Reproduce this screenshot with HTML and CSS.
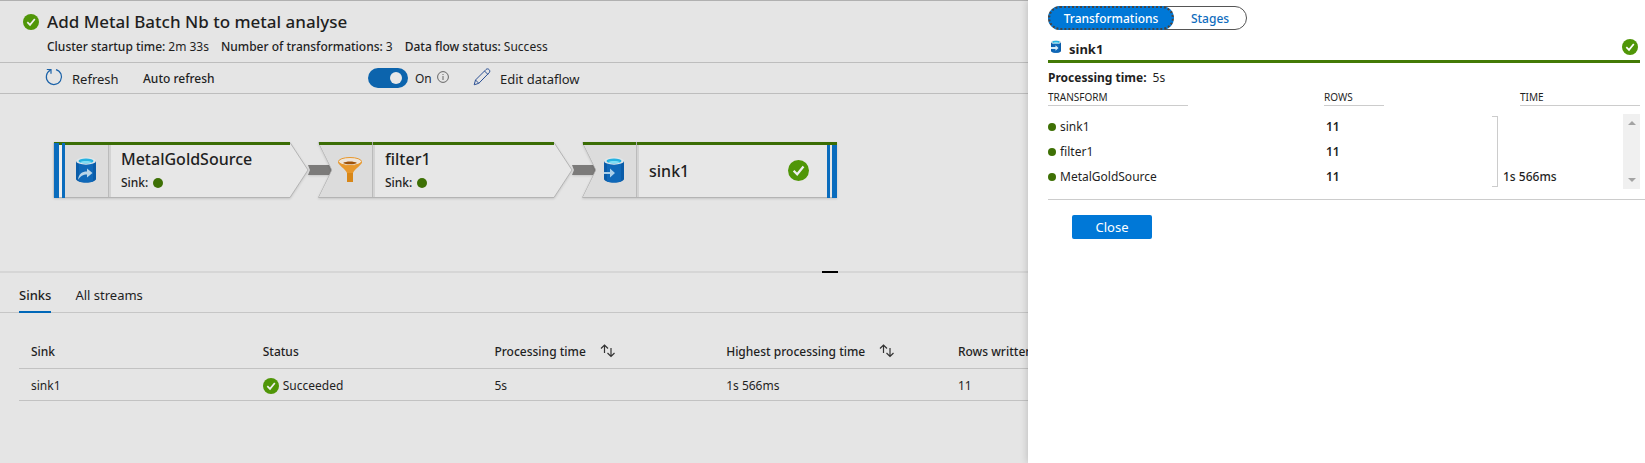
FILE: index.html
```html
<!DOCTYPE html>
<html lang="en">
<head>
<meta charset="utf-8">
<title>Data flow monitoring</title>
<link rel="stylesheet" href="styles.css">
</head>
<body>
<svg class="defs" aria-hidden="true">
  <symbol id="check" viewBox="0 0 16 16">
    <circle cx="8" cy="8" r="8" fill="var(--check)"/>
    <path d="M4.3 8.2 7 10.9 11.8 5" fill="none" stroke="var(--tick)" stroke-width="1.7"/>
  </symbol>
  <symbol id="db" viewBox="0 0 20 26">
    <path d="M0 4v18c0 1.900 4.500 3.500 10 3.500s10-1.600 10-3.500V4z" fill="#0a5ca8"/>
    <path d="M3 5v19.500c2 .7 4.500 1 7 1s5-.3 7-1V5z" fill="#0f68b8"/>
    <ellipse cx="10" cy="4" rx="10" ry="3.700" fill="#dfe6ea"/>
    <ellipse cx="10" cy="4" rx="7.500" ry="2.600" fill="#26b2e0"/>
    <path d="M4 5.200c2-1.500 10-1.500 12 0-2 1.600-10 1.600-12 0z" fill="#7fdcf3"/>
  </symbol>
  <symbol id="sort" viewBox="0 0 16 14">
    <path d="M4.500 9V1.500M1 4.500l3.500-3.500L8 4.500M11 4v8.500M7.500 9l3.500 3.500L14.500 9" fill="none" stroke="#333" stroke-width="1.200"/>
  </symbol>
</svg>

<main class="monitor">
  <header class="title-block">
    <svg class="status-icon"><use href="#check"/></svg>
    <div>
      <h1>Add Metal Batch Nb to metal analyse</h1>
      <dl class="facts">
        <div><dt>Cluster startup time:</dt><dd>2m 33s</dd></div>
        <div><dt>Number of transformations:</dt><dd>3</dd></div>
        <div><dt>Data flow status:</dt><dd>Success</dd></div>
      </dl>
    </div>
  </header>

  <div class="toolbar">
    <button class="tool refresh" type="button">
      <svg viewBox="0 0 18 18"><path d="M11 1.600A7.600 7.600 0 1 1 5.200 2.300M1.800 1.500H6V5.700" fill="none" stroke="#1b62a8" stroke-width="1.200"/></svg>
      <span>Refresh</span>
    </button>
    <label class="auto-label" for="auto">Auto refresh</label>
    <input class="toggle" id="auto" type="checkbox" role="switch" checked>
    <span class="toggle-state">On</span>
    <svg class="info" viewBox="0 0 12 12"><circle cx="6" cy="6" r="5.400" fill="none" stroke="#666"/><path d="M6 5v4M6 3v1" stroke="#666"/></svg>
    <button class="tool edit" type="button">
      <svg viewBox="0 0 18 18"><path d="M1.200 16.800 2.500 12 13 1.500c1-1 2.300-.7 3.100.1s1 2.100.1 3.100L5.800 15.300zM2.500 12l3.300 3.300M11.500 3l3.300 3.300" fill="none" stroke="#2a4f94" stroke-width="1"/></svg>
      <span>Edit dataflow</span>
    </button>
  </div>

  <section class="graph" aria-label="Data flow">
    <article class="node source">
      <svg class="shape" viewBox="0 0 280 58">
        <path d="M0 .5H236L254 28 236 55.500H0z" fill="#e7e7e7" stroke="#b4b4b4"/>
        <path d="M11 0H54V55H11z" fill="#dcdcdc"/>
        <path d="M54.500 3V55" stroke="#bbb"/><path d="M56 3V55" stroke="#d3d3d3" stroke-width="2"/>
        <path d="M0 1.500H236" stroke="#3b6d05" stroke-width="3"/>
        <path d="M0 1H5V56H0zM8 1h3V56H8z" fill="#0a6cbd"/><path d="M5 3h3V55H5z" fill="#efefef"/>
        <path d="M254 23H276L278 28 276 33H254L256 28z" fill="#7c7b7a"/>
      </svg>
      <svg class="node-icon" viewBox="0 0 20 26"><use href="#db"/><path d="M2 23c.5-6 4-8.500 9-8.500V11.500l5.500 4.500-5.500 4.500V17.500c-4 0-6.500 1.500-9 5.500z" fill="#b9d5e8"/></svg>
      <div class="node-text"><h2>MetalGoldSource</h2><p>Sink: <i class="dot"></i></p></div>
    </article>
    <article class="node">
      <svg class="shape" viewBox="0 0 280 58">
        <path d="M.5 .5H236L254 28 236 55.500H.5L14 28z" fill="#e7e7e7" stroke="#b4b4b4"/>
        <path d="M1 1H54V55H1L14.500 28z" fill="#dcdcdc"/>
        <path d="M54.500 3V55" stroke="#bbb"/><path d="M56 3V55" stroke="#d3d3d3" stroke-width="2"/>
        <path d="M1 1.500H236" stroke="#3b6d05" stroke-width="3"/><path d="M54.500 0V3" stroke="#aaa"/>
        <path d="M254 23H276L278 28 276 33H254L256 28z" fill="#7c7b7a"/>
      </svg>
      <svg class="node-icon funnel" viewBox="0 0 24 26">
        <path d="M0 5c0 3 7 6.500 9 11v9h6V16c2-4.500 9-8 9-11z" fill="#e8982c"/>
        <path d="M9 16h6v9H9z" fill="#d88718"/>
        <ellipse cx="12" cy="4.500" rx="11.500" ry="4" fill="#eee4d8" stroke="#e8982c"/>
        <path d="M5 6c3-2 11-2 14 0-3 1.800-11 1.800-14 0z" fill="#9f5208"/>
      </svg>
      <div class="node-text"><h2>filter1</h2><p>Sink: <i class="dot"></i></p></div>
    </article>
    <article class="node">
      <svg class="shape" viewBox="0 0 280 58">
        <path d="M.5 .5H254V55.500H.5L14 28z" fill="#e7e7e7" stroke="#b4b4b4"/>
        <path d="M1 1H54V55H1L14.500 28z" fill="#dcdcdc"/>
        <path d="M54.500 3V55" stroke="#bbb"/><path d="M56 3V55" stroke="#d3d3d3" stroke-width="2"/>
        <path d="M245 1h3V56h-3zM250 1h5V56h-5z" fill="#0a6cbd"/>
        <path d="M1 1.500H255" stroke="#3b6d05" stroke-width="3"/><path d="M54.500 0V3" stroke="#aaa"/>
      </svg>
      <svg class="node-icon" viewBox="0 0 20 26"><use href="#db"/><path d="M0 15h6v-3.500l5 4.500-5 4.500V17H0z" fill="#a9cfe9"/></svg>
      <div class="node-text"><h2>sink1</h2></div>
      <svg class="node-check"><use href="#check"/></svg>
    </article>
  </section>

  <div class="splitter"><span></span></div>

  <nav class="tabs">
    <button type="button" class="tab active">Sinks</button>
    <button type="button" class="tab">All streams</button>
  </nav>

  <div class="results">
    <table>
      <thead>
        <tr><th>Sink</th><th>Status</th><th>Processing time<svg class="sort"><use href="#sort"/></svg></th><th>Highest processing time<svg class="sort"><use href="#sort"/></svg></th><th class="rest">Rows written</th></tr>
      </thead>
      <tbody>
        <tr><td>sink1</td><td><span class="state"><svg class="status-icon"><use href="#check"/></svg>Succeeded</span></td><td>5s</td><td>1s 566ms</td><td>11</td></tr>
      </tbody>
    </table>
  </div>
</main>

<aside class="panel">
  <div class="pills">
    <button type="button" class="pill on">Transformations</button>
    <button type="button" class="pill">Stages</button>
  </div>
  <div class="panel-title">
    <svg class="mini-db" viewBox="0 0 20 26"><use href="#db"/><path d="M0 14h9v-3.500l6 5.500-6 5.500V18H0z" fill="#d9ecf8"/></svg>
    <h2>sink1</h2>
    <svg class="status-icon"><use href="#check"/></svg>
  </div>
  <p class="total"><b>Processing time:</b><span>5s</span></p>
  <table class="transforms">
    <thead>
      <tr><th class="c-name"><span>TRANSFORM</span></th><th class="c-rows"><span>ROWS</span></th><th class="c-time"><span>TIME</span></th></tr>
    </thead>
    <tbody>
      <tr><td><i class="dot"></i>sink1</td><td class="num">11</td>
        <td rowspan="3" class="time-cell"><div class="time"><span class="bracket"></span><span class="value">1s 566ms</span><div class="scroll"><svg viewBox="0 0 8 4"><path d="M0 4 4 0 8 4z"/></svg><svg viewBox="0 0 8 4"><path d="M0 0H8L4 4z"/></svg></div></div></td></tr>
      <tr><td><i class="dot"></i>filter1</td><td class="num">11</td></tr>
      <tr><td><i class="dot"></i>MetalGoldSource</td><td class="num">11</td></tr>
    </tbody>
  </table>
  <div class="panel-foot"><button type="button" class="close">Close</button></div>
</aside>
</body>
</html>
```

FILE: styles.css
```css
* { box-sizing: border-box; }
:root { --check: #509608; --tick: #f0f0f0; }
body {
  margin: 0;
  min-height: 100vh;
  position: relative;
  overflow: hidden;
  background: #e5e5e5;
  color: #1f1f1f;
  font: 13px/18px "Noto Sans", "Open Sans", sans-serif;
}
h1, h2, p, dl, dd { margin: 0; }
button { font: inherit; color: inherit; background: none; border: 0; padding: 0; }
svg { display: block; flex: none; overflow: visible; }
.defs { position: absolute; width: 0; height: 0; }
.dot { display: inline-block; width: 10px; height: 10px; border-radius: 50%; background: #3e7005; }
.status-icon { width: 16px; height: 16px; }

.title-block {
  display: flex;
  gap: 8px;
  height: 63px;
  padding: 9px 23px 0;
  border-top: 1px solid #b0b0b0;
  border-bottom: 1px solid #bdbdbd;
}
.title-block .status-icon { margin-top: 4px; }
h1 { font-size: 17px; line-height: 24px; font-weight: 500; }
.facts { display: flex; gap: 12px; margin-top: 4px; font-size: 12px; }
.facts div { display: flex; gap: 3px; }
.facts dt { font-weight: 500; }

.toolbar {
  display: flex;
  align-items: center;
  height: 31px;
  padding-left: 45px;
  border-bottom: 1px solid #bdbdbd;
}
.tool { display: flex; align-items: center; gap: 9px; }
.tool svg { width: 18px; height: 18px; margin-bottom: 2px; }
.tool span { padding-top: 2px; }
.refresh { width: 98px; }
.auto-label { width: 225px; padding-top: 2px; font-size: 12px; font-weight: 500; }
.toggle {
  appearance: none;
  display: flex;
  align-items: center;
  justify-content: flex-end;
  width: 40px;
  height: 20px;
  margin: 0 7px 0 0;
  padding-right: 6px;
  border-radius: 10px;
  background: #0c64ad;
}
.toggle::after { content: ""; width: 12px; height: 12px; border-radius: 50%; background: #e8e8e8; }
.toggle-state { width: 22px; padding-top: 2px; font-size: 12px; }
.info { width: 12px; height: 12px; margin: 0 24px 3px 0; }

.graph { display: flex; gap: 10px; height: 177px; padding: 48px 0 0 54px; }
.node { position: relative; display: flex; align-items: center; width: 254px; height: 56px; }
.shape { position: absolute; left: 0; top: 0; width: 280px; height: 58px; filter: drop-shadow(0 1px 1px #0002); }
.node-icon { position: relative; width: 20px; height: 26px; margin: 0 25px 0 22px; }
.node-icon.funnel { width: 24px; margin: 0 23px 0 20px; }
.node-text { position: relative; flex: 1; padding-top: 2px; }
.node h2 { font-size: 16px; line-height: 24px; font-weight: 500; }
.node p { display: flex; align-items: center; gap: 5px; line-height: 24px; font-size: 12px; font-weight: 500; }
.node-check { position: relative; width: 21px; height: 21px; margin-right: 27px; }

.splitter { display: flex; justify-content: center; height: 2px; background: #d6d6d6; }
.splitter span { width: 16px; margin-left: 14px; background: #000; }
.tabs { display: flex; gap: 24px; height: 40px; padding: 0 19px; border-bottom: 1px solid #c6c6c6; }
.tab { height: 40px; padding-top: 6px; border-bottom: 2px solid transparent; }
.tab.active { font-weight: 500; border-color: #0067b8; }

.results { padding: 22px 4px 0 19px; }
table { border-collapse: collapse; table-layout: fixed; width: 100%; }
.results { font-size: 12px; }
.results th, .results td { width: 14.286%; padding: 0 0 0 12px; text-align: left; white-space: nowrap; }
.results th.rest { width: auto; }
.results th { height: 33px; padding-top: 2px; font-weight: 500; }
.results td { height: 32px; padding-top: 4px; }
.results tr { border-bottom: 1px solid #c2c2c2; }
.state { display: flex; align-items: center; gap: 4px; }
.sort { display: inline-block; width: 16px; height: 14px; margin-left: 14px; vertical-align: -2px; }

.panel {
  --tick: #fff;
  position: absolute;
  top: 0;
  right: 0;
  bottom: 0;
  width: 617px;
  padding: 6px 0 0 20px;
  background: #fff;
  box-shadow: 0 0 8px #0003;
}
.pills { display: flex; width: fit-content; height: 24px; border: 1px solid #555; border-radius: 12px; font-size: 12px; }
.pill { width: 72px; padding-top: 1px; color: #0f6cbd; font-weight: 500; }
.pill.on { width: 126px; margin: -1px 0 -1px -1px; border: 2px dotted #444; border-radius: 12px; background: #0078d7; color: #fff; }
.panel-title {
  display: flex;
  align-items: center;
  height: 33px;
  margin-right: 5px;
  padding: 7px 2px 4px 3px;
  border-bottom: 3px solid #437a06;
}
.panel-title h2 { flex: 1; margin-left: 8px; padding-top: 4px; font-size: 13px; font-weight: 700; }
.mini-db { width: 10px; height: 13px; }
.total { display: flex; gap: 6px; padding-top: 6px; font-size: 12px; }
.total b { font-size: 12px; font-weight: 700; }
.transforms { width: calc(100% - 5px); }
.transforms th { height: 27px; padding: 2px 0 0; vertical-align: top; text-align: left; font-size: 10px; font-weight: 400; }
.transforms th span { display: block; border-bottom: 1px solid #ccc; line-height: 16px; }
.c-name { width: 276px; }
.c-name span { width: 140px; }
.c-rows { width: 168px; }
.c-rows span { width: 60px; }
.transforms .c-time { padding-left: 28px; }
.transforms td { height: 25px; padding: 0; font-size: 12px; }
.transforms .dot { width: 8px; height: 8px; margin-right: 4px; }
.transforms .num { padding-left: 2px; font-weight: 600; }
.time { display: flex; height: 75px; }
.bracket { width: 6px; margin: 2px 5px 2px 0; border: 1px solid #ccc; border-left: 0; }
.value { flex: 1; align-self: flex-end; padding-bottom: 3px; font-size: 12px; font-weight: 500; }
.scroll { display: flex; flex-direction: column; justify-content: space-between; align-items: center; width: 17px; padding: 7px 0; background: #f0f0f0; }
.scroll svg { width: 8px; height: 4px; fill: #a3a3a3; }
.panel-foot { margin-top: 10px; padding: 15px 24px; border-top: 1px solid #ccc; }
.close { width: 80px; height: 24px; border-radius: 2px; background: #0078d7; color: #fff; font-size: 13px; }
```
